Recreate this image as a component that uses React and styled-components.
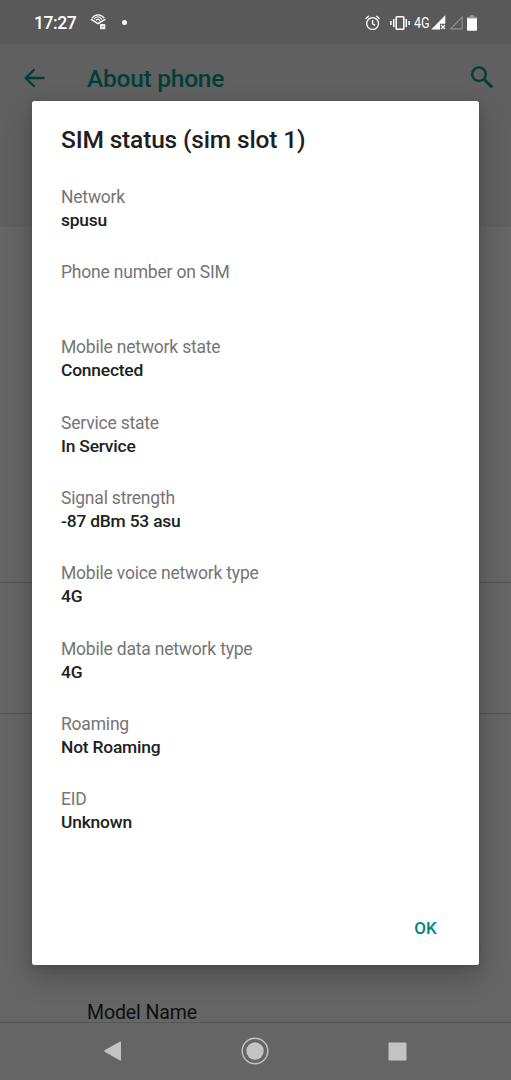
import React from "react";
import styled, { createGlobalStyle } from "styled-components";

const GlobalStyle = createGlobalStyle`
  * { box-sizing: border-box; }
  body { margin: 0; background: #656565; font-family: Roboto, sans-serif; overflow: hidden; }
`;

const Screen = styled.div`
  position: relative;
  display: flex;
  flex-direction: column;
  width: 511px;
  height: 1080px;
  background: #656565;
  overflow: hidden;
`;

const StatusBar = styled.header`
  display: flex;
  align-items: center;
  flex: 0 0 44px;
  padding: 1px 33px 0 34px;
  background: #595959;
  color: #fff;
`;

const Clock = styled.span`
  width: 56px;
  font-size: 17.5px;
  font-weight: 500;
  line-height: 22px;
  letter-spacing: -0.4px;
`;

const Dot = styled.i`
  width: 5px;
  height: 5px;
  margin-left: 15px;
  border-radius: 50%;
  background: #fff;
`;

const StatusIcons = styled.div`
  display: flex;
  align-items: center;
  margin-left: auto;
`;

const NetworkBadge = styled.span`
  width: 17px;
  margin-left: 4px;
  font-size: 15px;
  line-height: 18px;
  letter-spacing: -0.2px;
  transform: scaleX(0.84);
  transform-origin: left;
`;

const Glyph = styled.svg`
  display: block;
  flex: none;
  margin-left: ${(p) => p.$gap || 0}px;
`;

const AppBar = styled.div`
  display: flex;
  flex: 0 0 183px;
  align-items: flex-start;
  padding: 20px 17px 0 24px;
  background: #606060;
  color: #003f35;
`;

const AppTitle = styled.h1`
  flex: 1;
  margin: 0 0 0 42px;
  font-size: 24.5px;
  font-weight: 500;
  line-height: 30px;
  letter-spacing: -0.25px;
`;

const Section = styled.section`
  flex: 0 0 ${(p) => p.$height}px;
  border-bottom: 1px solid #555;
`;

const ModelRow = styled.section`
  flex: 0 0 308px;
  min-height: 0;
  padding: 286px 0 0 87px;
  color: #0e0e0e;
  font-size: 19.5px;
  line-height: 25px;
  letter-spacing: -0.1px;
`;

const NavBar = styled.nav`
  display: flex;
  align-items: center;
  flex: 0 0 58px;
  padding: 0 104px 1px 103px;
  justify-content: space-between;
  border-top: 1px solid #585858;
  background: #656565;
`;

const Dialog = styled.div`
  position: absolute;
  left: 32px;
  top: 100.5px;
  display: flex;
  flex-direction: column;
  width: 446.5px;
  height: 864.5px;
  padding: 24px 30px 20px 29px;
  border-radius: 2.5px;
  background: #fff;
  box-shadow: 0 12px 28px rgba(0, 0, 0, 0.22), 0 2px 9px rgba(0, 0, 0, 0.14);
`;

const DialogTitle = styled.h2`
  margin: 0;
  color: #202020;
  font-size: 24.5px;
  font-weight: 500;
  line-height: 30px;
  letter-spacing: -0.16px;
`;

const Fields = styled.dl`
  flex: 1;
  margin: 31.3px 0 0;
`;

const Field = styled.div`
  height: 75.3px;
`;

const Label = styled.dt`
  color: #757575;
  font-size: 17.5px;
  line-height: 23px;
  letter-spacing: -0.2px;
`;

const Value = styled.dd`
  margin: 0;
  color: #202020;
  font-size: 17.4px;
  font-weight: 500;
  line-height: 23.4px;
  letter-spacing: -0.2px;
`;

const OkButton = styled.button`
  align-self: flex-end;
  width: 46px;
  height: 34px;
  padding: 0;
  border: 0;
  background: transparent;
  color: #008577;
  font: 500 17px/34px Roboto, sans-serif;
  letter-spacing: -0.1px;
`;

const FIELDS = [
  ["Network", "spusu"],
  ["Phone number on SIM", ""],
  ["Mobile network state", "Connected"],
  ["Service state", "In Service"],
  ["Signal strength", "-87 dBm 53 asu"],
  ["Mobile voice network type", "4G"],
  ["Mobile data network type", "4G"],
  ["Roaming", "Not Roaming"],
  ["EID", "Unknown"],
];

const CastIcon = () => (
  <Glyph width="17" height="17" viewBox="0 0 17 17" fill="none" stroke="#fff">
    <path d="M.8 5.2 8 9.7l7.4-4.500" strokeWidth="1.5" />
    <path d="M2 4.2C5.5-.2 11-.1 14.2 4.2M4 5.1C6.5 1.8 10 2 11.8 5.6M6 6.3c1.5-1.9 3-1.4 4 .6" strokeWidth="1.2" />
    <path d="M10 10h5.3v5.2H10z" fill="#eee" stroke="none" />
    <path d="M11.5 12.6h2.3" stroke="#999" strokeWidth=".9" />
  </Glyph>
);

const AlarmIcon = () => (
  <Glyph width="16" height="16" viewBox="0 0 16 16" fill="none" stroke="#fff" strokeWidth="1.35">
    <circle cx="7.6" cy="8.5" r="5.9" />
    <path d="M7.6 5v3.9l2.6 1.5M.6 3.7l3.2-2.8M14.6 3.7l-3.2-2.8" />
  </Glyph>
);

const VibrateIcon = () => (
  <Glyph $gap={9} width="20" height="14" viewBox="0 0 20 14" fill="none" stroke="#fff">
    <rect x="6.2" y=".8" width="7.6" height="12.4" rx=".8" strokeWidth="1.6" />
    <path d="M3.7 3v8M.9 5v4M16.3 3v8M19.1 5v4" strokeWidth="1.5" />
  </Glyph>
);

const SignalIcon = () => (
  <Glyph width="15" height="15" viewBox="0 0 15 15">
    <path d="M14.3.2v8.6H9v5.8H.2z" fill="#fff" />
    <path d="m10 10 4 4m0-4-4 4" stroke="#fff" strokeWidth="1.3" />
  </Glyph>
);

const EmptySignalIcon = () => (
  <Glyph $gap={3} width="15" height="15" viewBox="0 0 15 15">
    <path d="M13.2 2v11.8H1.6z" fill="none" stroke="#8d8d8d" strokeWidth="1.2" />
  </Glyph>
);

const BatteryIcon = () => (
  <Glyph $gap={3} width="11" height="16" viewBox="0 0 11 16">
    <path d="M3 .2h4v1.6h2.2Q10 1.8 10 2.6V5H0V2.6q0-.8.8-.8H3z" fill="#999" />
    <path d="M0 3.6h10V15q0 .8-.8.8H.8Q0 15.8 0 15z" fill="#fff" />
  </Glyph>
);

const BackArrow = () => (
  <Glyph width="21" height="28" viewBox="0 0 21 28" fill="none" stroke="currentColor" strokeWidth="2.3">
    <path d="M20.5 14H2M10.5 5.2 1.8 14l8.7 8.8" />
  </Glyph>
);

const SearchIcon = () => (
  <Glyph width="24" height="28" viewBox="0 0 24 28" fill="none" stroke="currentColor">
    <circle cx="9" cy="10.2" r="6.8" strokeWidth="2.4" />
    <path d="m14 15.2 8.2 8.2" strokeWidth="3" />
  </Glyph>
);

export default function App() {
  return (
    <>
      <GlobalStyle />
      <Screen>
        <StatusBar>
          <Clock>17:27</Clock>
          <CastIcon />
          <Dot />
          <StatusIcons>
            <AlarmIcon />
            <VibrateIcon />
            <NetworkBadge>4G</NetworkBadge>
            <SignalIcon />
            <EmptySignalIcon />
            <BatteryIcon />
          </StatusIcons>
        </StatusBar>
        <AppBar>
          <BackArrow />
          <AppTitle>About phone</AppTitle>
          <SearchIcon />
        </AppBar>
        <Section $height={356} />
        <Section $height={131} />
        <ModelRow>Model Name</ModelRow>
        <NavBar>
          <Glyph width="19" height="20" viewBox="0 0 19 20">
            <path d="M17 .6q1-.5 1 .7v17.4q0 1.2-1 .7L1.6 10.7q-1-.7 0-1.4z" fill="#c3c3c3" />
          </Glyph>
          <Glyph width="28" height="28" viewBox="0 0 28 28">
            <circle cx="14" cy="14" r="12.8" fill="none" stroke="#c3c3c3" strokeWidth="1.4" />
            <circle cx="14" cy="14" r="8.7" fill="#c3c3c3" />
          </Glyph>
          <Glyph width="19" height="19" viewBox="0 0 19 19">
            <rect x=".5" y=".5" width="18" height="18" rx="1" fill="#c3c3c3" />
          </Glyph>
        </NavBar>
        <Dialog role="dialog" aria-label="SIM status">
          <DialogTitle>SIM status (sim slot 1)</DialogTitle>
          <Fields>
            {FIELDS.map(([label, value]) => (
              <Field key={label}>
                <Label>{label}</Label>
                <Value>{value}</Value>
              </Field>
            ))}
          </Fields>
          <OkButton>OK</OkButton>
        </Dialog>
      </Screen>
    </>
  );
}
